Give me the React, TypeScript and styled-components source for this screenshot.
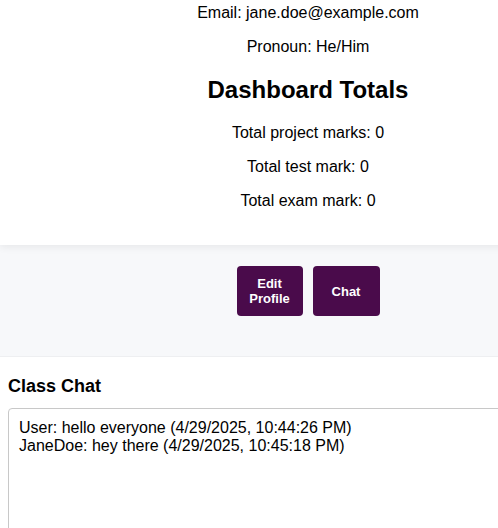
import styled, { createGlobalStyle } from "styled-components";

const GlobalStyle = createGlobalStyle`
  body {
    margin: 0;
    background: #ffffff;
    font-family: "Liberation Sans", Arial, sans-serif;
    color: #000;
  }
`;

const Page = styled.div`
  min-width: 616px;
`;

const ProfileCard = styled.section`
  background: #ffffff;
  text-align: center;
  padding: 4px 0 19px;
  box-shadow: 0 2px 8px rgba(0, 0, 0, 0.07);
  position: relative;
  z-index: 1;

  & > :first-child {
    margin-top: 0;
  }
`;

const Line = styled.p`
  font-size: 16px;
  margin: 16px 0;
`;

const SectionTitle = styled.h2`
  font-size: 24px;
  font-weight: 700;
  margin: 20px 0;
`;

const Actions = styled.div`
  background: #f7f8fa;
  display: flex;
  justify-content: center;
  gap: 10px;
  padding: 21px 0 40px;
  border-bottom: 1px solid #eeeff1;
`;

const ActionButton = styled.button<{ $width: number }>`
  width: ${(p) => p.$width}px;
  height: 50px;
  padding: 0 8px;
  border: none;
  border-radius: 4px;
  background: #4a0b4b;
  color: #ffffff;
  font-family: "Liberation Sans", Arial, sans-serif;
  font-size: 13px;
  font-weight: 700;
  line-height: 15px;
  cursor: pointer;
`;

const ChatSection = styled.section`
  background: #ffffff;
  padding: 0 8px;
`;

const ChatTitle = styled.h3`
  font-size: 18px;
  font-weight: 700;
  margin: 0;
  padding: 19px 0 11px;
`;

const ChatLog = styled.div`
  width: 600px;
  height: 200px;
  box-sizing: border-box;
  border: 1px solid #c8c8c8;
  border-radius: 4px;
  padding: 10px;
  font-size: 16px;
  line-height: 17.7px;
  white-space: pre-line;
`;

const messages = [
  "User: hello everyone (4/29/2025, 10:44:26 PM)",
  "JaneDoe: hey there (4/29/2025, 10:45:18 PM)",
];

export default function App() {
  return (
    <Page>
      <GlobalStyle />
      <ProfileCard>
        <Line>Email: jane.doe@example.com</Line>
        <Line>Pronoun: He/Him</Line>
        <SectionTitle>Dashboard Totals</SectionTitle>
        <Line>Total project marks: 0</Line>
        <Line>Total test mark: 0</Line>
        <Line>Total exam mark: 0</Line>
      </ProfileCard>
      <Actions>
        <ActionButton $width={66}>Edit Profile</ActionButton>
        <ActionButton $width={67}>Chat</ActionButton>
      </Actions>
      <ChatSection>
        <ChatTitle>Class Chat</ChatTitle>
        <ChatLog>{messages.join("\n")}</ChatLog>
      </ChatSection>
    </Page>
  );
}
